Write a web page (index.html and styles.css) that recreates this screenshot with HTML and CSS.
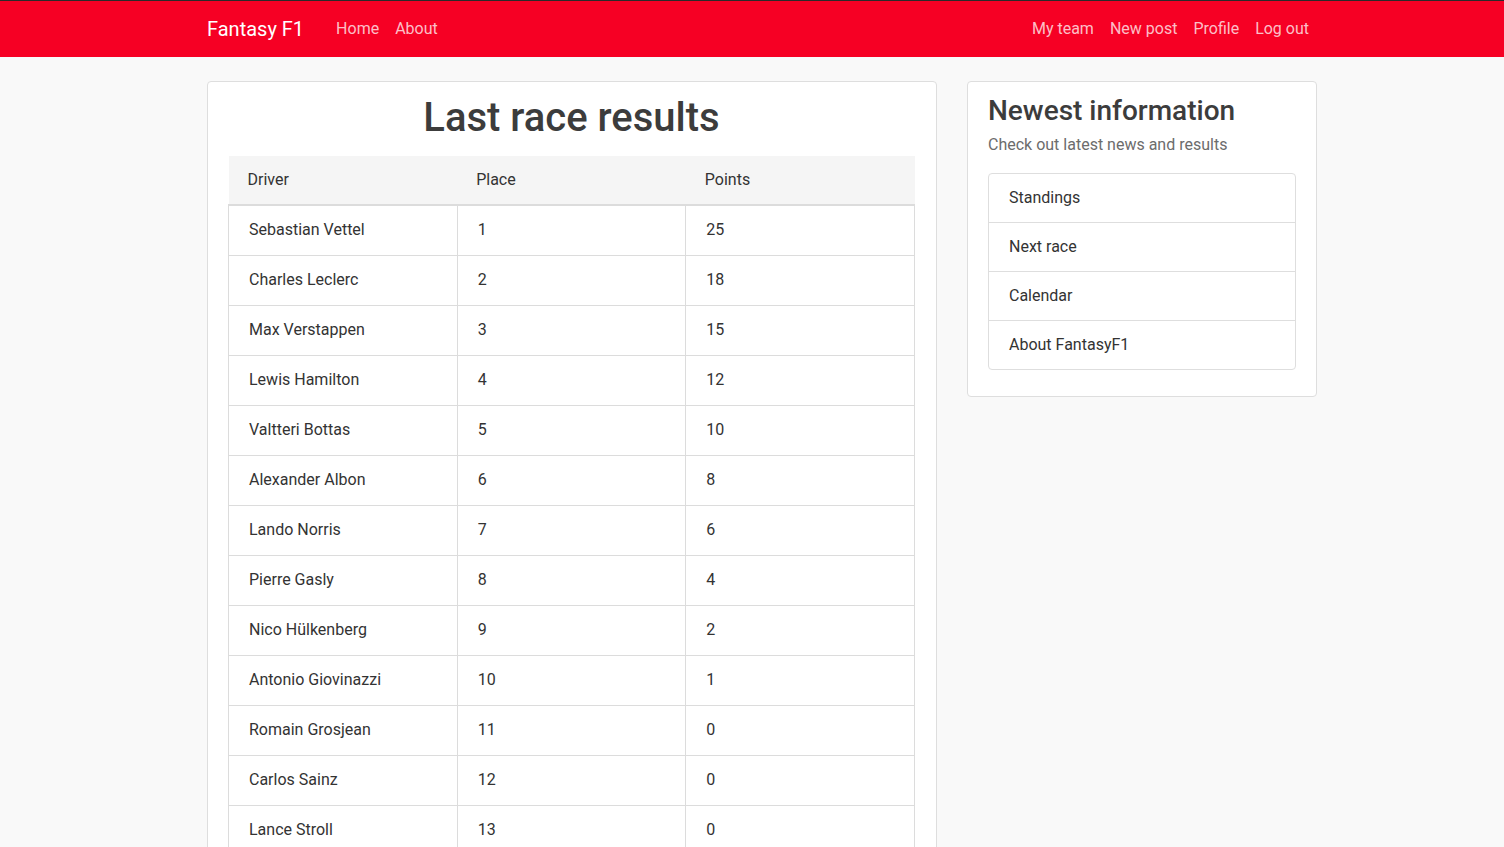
FILE: index.html
```html
<!DOCTYPE html>
<html lang="en">
<head>
<meta charset="utf-8">
<title>Fantasy F1</title>
<link rel="stylesheet" href="styles.css">
</head>
<body>
<nav class="navbar">
  <div class="container nav-inner">
    <a class="brand" href="#">Fantasy F1</a>
    <ul class="nav-links">
      <li><a href="#">Home</a></li>
      <li><a href="#">About</a></li>
    </ul>
    <ul class="nav-links nav-right">
      <li><a href="#">My team</a></li>
      <li><a href="#">New post</a></li>
      <li><a href="#">Profile</a></li>
      <li><a href="#">Log out</a></li>
    </ul>
  </div>
</nav>
<main class="container layout">
  <section class="card main-card">
    <h1 class="main-title">Last race results</h1>
    <table class="results">
      <thead>
        <tr><th>Driver</th><th>Place</th><th>Points</th></tr>
      </thead>
      <tbody>
        <tr><td>Sebastian Vettel</td><td>1</td><td>25</td></tr>
        <tr><td>Charles Leclerc</td><td>2</td><td>18</td></tr>
        <tr><td>Max Verstappen</td><td>3</td><td>15</td></tr>
        <tr><td>Lewis Hamilton</td><td>4</td><td>12</td></tr>
        <tr><td>Valtteri Bottas</td><td>5</td><td>10</td></tr>
        <tr><td>Alexander Albon</td><td>6</td><td>8</td></tr>
        <tr><td>Lando Norris</td><td>7</td><td>6</td></tr>
        <tr><td>Pierre Gasly</td><td>8</td><td>4</td></tr>
        <tr><td>Nico Hülkenberg</td><td>9</td><td>2</td></tr>
        <tr><td>Antonio Giovinazzi</td><td>10</td><td>1</td></tr>
        <tr><td>Romain Grosjean</td><td>11</td><td>0</td></tr>
        <tr><td>Carlos Sainz</td><td>12</td><td>0</td></tr>
        <tr><td>Lance Stroll</td><td>13</td><td>0</td></tr>
      </tbody>
    </table>
  </section>
  <aside class="card side-card">
    <h3 class="side-title">Newest information</h3>
    <p class="side-sub">Check out latest news and results</p>
    <ul class="list-group">
      <li>Standings</li>
      <li>Next race</li>
      <li>Calendar</li>
      <li>About FantasyF1</li>
    </ul>
  </aside>
</main>
</body>
</html>
```
FILE: styles.css
```css
* { box-sizing: border-box; }
body {
  margin: 0;
  background: #f9f9f9;
  font-family: Roboto, "Liberation Sans", sans-serif;
  font-size: 16px;
  line-height: 24px;
  color: #333;
}
.container {
  width: 1130px;
  margin: 0 auto;
  padding-left: 20px;
}
.navbar {
  background: #f60024;
  border-top: 1px solid #2a2a2a;
  height: 57px;
}
.nav-inner {
  display: flex;
  align-items: center;
  height: 56px;
}
.brand {
  color: #fff;
  text-decoration: none;
  font-size: 20px;
  line-height: 30px;
  margin-right: 24px;
}
.nav-links {
  display: flex;
  list-style: none;
  margin: 0;
  padding: 0;
}
.nav-links a {
  display: block;
  padding: 8px;
  color: rgba(255, 255, 255, 0.75);
  text-decoration: none;
}
.nav-right {
  margin-left: auto;
}
.layout {
  display: flex;
  gap: 30px;
  margin-top: 24px;
  align-items: flex-start;
}
.card {
  background: #fff;
  border: 1px solid #dedede;
  border-radius: 4px;
}
.main-card {
  width: 730px;
  padding: 12px 21px 20px 20px;
}
.main-title {
  margin: 0 0 14px;
  text-align: center;
  font-size: 40px;
  line-height: 48px;
  font-weight: 500;
  color: #3c3c3c;
}
.results {
  width: 100%;
  border-collapse: collapse;
}
.results th {
  background: #f5f5f5;
  text-align: left;
  font-weight: 400;
  padding: 12px 19px;
  border-bottom: 2px solid #dcdcdc;
}
.results td {
  padding: 12px 20px 13px;
  border: 1px solid #dcdcdc;
  width: 33.33%;
}
.side-card {
  width: 350px;
  padding: 12px 20px 26px;
}
.side-title {
  margin: 0 0 5px;
  font-size: 28px;
  line-height: 34px;
  font-weight: 500;
  color: #3c3c3c;
}
.side-sub {
  margin: 0 0 16px;
  color: #6c6c6c;
}
.list-group {
  list-style: none;
  margin: 0;
  padding: 0;
  border: 1px solid #dedede;
  border-radius: 4px;
}
.list-group li {
  padding: 12px 20px;
  border-top: 1px solid #dedede;
}
.list-group li:first-child {
  border-top: none;
}
```
